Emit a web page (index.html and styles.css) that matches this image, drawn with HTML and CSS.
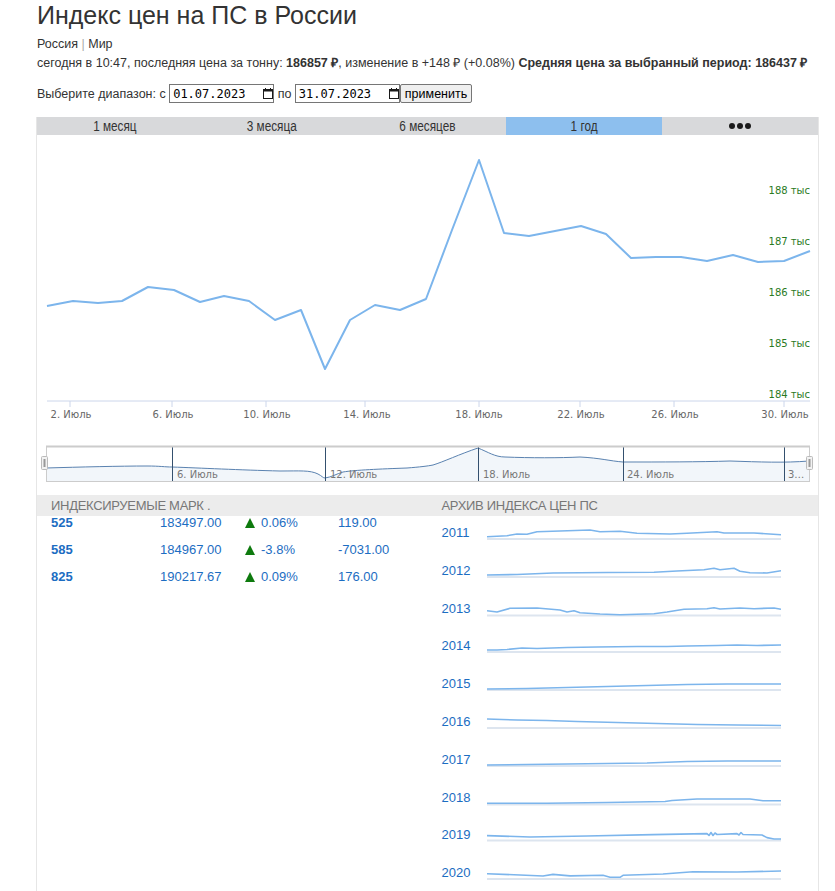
FILE: index.html
```html
<!DOCTYPE html>
<html lang="ru">
<head>
<meta charset="utf-8">
<title>Индекс цен на ПС в России</title>
<link rel="stylesheet" href="styles.css">
</head>
<body>
<h1 class="title">Индекс цен на ПС в России</h1>
<div class="regions"><a class="reg">Россия</a> <span class="sep">|</span> <a class="reg">Мир</a></div>
<p class="summary">сегодня в 10:47, последняя цена за тонну: <b>186857 ₽</b>, изменение в +148 ₽ (+0.08%) <b>Средняя цена за выбранный период: 186437 ₽</b></p>
<form class="range">
  <span class="lbl">Выберите диапазон: с </span>
  <label class="date"><input class="date-input" type="text" value="01.07.2023"><svg class="cal" viewBox="0 0 10 11" width="10" height="11"><rect x="0.5" y="1.5" width="9" height="9" fill="none" stroke="#1a1a1a"/><rect x="0.5" y="1.5" width="9" height="2" fill="#1a1a1a"/><rect x="2" y="0" width="1" height="2" fill="#1a1a1a"/><rect x="7" y="0" width="1" height="2" fill="#1a1a1a"/></svg></label>
  <span class="lbl"> по </span>
  <label class="date"><input class="date-input" type="text" value="31.07.2023"><svg class="cal" viewBox="0 0 10 11" width="10" height="11"><rect x="0.5" y="1.5" width="9" height="9" fill="none" stroke="#1a1a1a"/><rect x="0.5" y="1.5" width="9" height="2" fill="#1a1a1a"/><rect x="2" y="0" width="1" height="2" fill="#1a1a1a"/><rect x="7" y="0" width="1" height="2" fill="#1a1a1a"/></svg></label>
  <button class="apply" type="button">применить</button>
</form>

<div class="board">
  <div class="tabs">
    <div class="tab"><span class="tab-text">1 месяц</span></div>
    <div class="tab"><span class="tab-text">3 месяца</span></div>
    <div class="tab"><span class="tab-text">6 месяцев</span></div>
    <div class="tab active"><span class="tab-text">1 год</span></div>
    <div class="tab more"><span class="dot"></span><span class="dot"></span><span class="dot"></span></div>
  </div>

  <div class="chart">
    <svg class="chart-svg" width="781" height="360" viewBox="37 135 781 360">
      <g class="ylabels">
        <text x="810" y="194">188 тыс</text>
        <text x="810" y="245">187 тыс</text>
        <text x="810" y="296">186 тыс</text>
        <text x="810" y="347">185 тыс</text>
        <text x="810" y="398">184 тыс</text>
      </g>
      <line x1="47" y1="401" x2="810" y2="401" class="axis"/>
      <g class="ticks">
        <line x1="70" y1="401" x2="70" y2="407"/>
        <line x1="172" y1="401" x2="172" y2="407"/>
        <line x1="266" y1="401" x2="266" y2="407"/>
        <line x1="365" y1="401" x2="365" y2="407"/>
        <line x1="479" y1="401" x2="479" y2="407"/>
        <line x1="580" y1="401" x2="580" y2="407"/>
        <line x1="674" y1="401" x2="674" y2="407"/>
        <line x1="784" y1="401" x2="784" y2="407"/>
      </g>
      <g class="xlabels">
        <text x="71" y="418">2. Июль</text>
        <text x="173" y="418">6. Июль</text>
        <text x="267" y="418">10. Июль</text>
        <text x="367" y="418">14. Июль</text>
        <text x="479" y="418">18. Июль</text>
        <text x="581" y="418">22. Июль</text>
        <text x="675" y="418">26. Июль</text>
        <text x="785" y="418">30. Июль</text>
      </g>
      <polyline class="series" points="47,306 73,301 98,303 122,301 148,287 174,290 200,302 224,296 249,301 275,320 301,310 325,369 350,320 375,305 400,310 426,299 452,230 479,160 504,233 529,236 555,231 581,226 606,234 631,258 656,257 681,257 707,261 733,255 758,262 784,261 810,251"/>

      <g class="navigator">
        <path class="nav-area" d="M46,468 C80,467 120,466 147,466 C160,466 165,467 172,467 C200,468 240,470 280,471 C300,471 310,470 318,474 C322,476 323,478 325,478 C332,477 336,474 343,472 C355,470 380,469 407,468 C420,467 428,466 433,465 C443,462 460,454 478,448 C488,452 495,457 505,457 C530,458 560,458 580,457 C600,458 610,461 623,462 C660,462 700,462 730,461 C760,462 784,463 809,461 L809,482 L46,482 Z"/>
        <path class="nav-line" d="M46,468 C80,467 120,466 147,466 C160,466 165,467 172,467 C200,468 240,470 280,471 C300,471 310,470 318,474 C322,476 323,478 325,478 C332,477 336,474 343,472 C355,470 380,469 407,468 C420,467 428,466 433,465 C443,462 460,454 478,448 C488,452 495,457 505,457 C530,458 560,458 580,457 C600,458 610,461 623,462 C660,462 700,462 730,461 C760,462 784,463 809,461"/>
        <g class="nav-grid">
          <line x1="172.5" y1="446" x2="172.5" y2="482"/>
          <line x1="325.5" y1="446" x2="325.5" y2="482"/>
          <line x1="478.5" y1="446" x2="478.5" y2="482"/>
          <line x1="623.5" y1="446" x2="623.5" y2="482"/>
          <line x1="784.5" y1="446" x2="784.5" y2="482"/>
        </g>
        <g class="nav-labels">
          <text x="177" y="478">6. Июль</text>
          <text x="330" y="478">12. Июль</text>
          <text x="483" y="478">18. Июль</text>
          <text x="627" y="478">24. Июль</text>
          <text x="788" y="478">3…</text>
        </g>
        <rect class="nav-outline" x="46.5" y="446.5" width="763" height="35"/>
        <line class="nav-top" x1="46" y1="446.5" x2="810" y2="446.5"/>
        <g class="handle">
          <rect x="41.5" y="456.5" width="6" height="13" rx="1"/>
          <line x1="44.5" y1="459" x2="44.5" y2="467"/>
        </g>
        <g class="handle">
          <rect x="806.5" y="456.5" width="6" height="13" rx="1"/>
          <line x1="809.5" y1="459" x2="809.5" y2="467"/>
        </g>
      </g>
    </svg>
  </div>

  <div class="lower">
    <section class="col">
      <h2 class="col-head">ИНДЕКСИРУЕМЫЕ МАРК .</h2>
      <div class="marks">
        <div class="mark"><a class="mark-name">525</a><span>183497.00</span><span class="chg"><i class="up"></i>0.06%</span><span>119.00</span></div>
        <div class="mark"><a class="mark-name">585</a><span>184967.00</span><span class="chg"><i class="up"></i>-3.8%</span><span>-7031.00</span></div>
        <div class="mark"><a class="mark-name">825</a><span>190217.67</span><span class="chg"><i class="up"></i>0.09%</span><span>176.00</span></div>
      </div>
    </section>
    <section class="col">
      <h2 class="col-head">АРХИВ ИНДЕКСА ЦЕН ПС</h2>
      <div class="archive">
        <div class="year"><a class="year-link">2011</a><svg class="spark" viewBox="0 0 294 15" width="294" height="15"><line class="base" x1="0" y1="13" x2="294" y2="13"/><polyline points="0,10.7 20,9.7 30,8 40,8.3 50,5.7 73,5 103,4 113,5.7 133,5.3 150,7.3 183,8 200,7.3 230,5.7 237,7 267,7 294,8.7"/></svg></div>
        <div class="year"><a class="year-link">2012</a><svg class="spark" viewBox="0 0 294 15" width="294" height="15"><line class="base" x1="0" y1="13" x2="294" y2="13"/><polyline points="0,11 30,10.5 66,9 120,8.5 167,8.3 190,7 217,5.7 227,4.3 233,5.7 247,4.3 253,7.3 263,8.7 280,9 294,6.7"/></svg></div>
        <div class="year"><a class="year-link">2013</a><svg class="spark" viewBox="0 0 294 15" width="294" height="15"><line class="base" x1="0" y1="13.5" x2="294" y2="13.5"/><polyline points="0,8.7 10,10 23,6.3 50,6 73,8 80,10 87,8.7 93,10.7 113,12 133,12.7 150,12.3 167,11.7 180,10 197,7.3 220,6.7 227,5.7 233,7 253,6 267,6.7 287,6 294,7.3"/></svg></div>
        <div class="year"><a class="year-link">2014</a><svg class="spark" viewBox="0 0 294 15" width="294" height="15"><line class="base" x1="0" y1="13" x2="294" y2="13"/><polyline points="0,11 10,11 20,10.5 35,9 50,9.5 80,8.5 110,8 150,7.5 180,7.5 200,7 230,6.5 250,6 270,6.5 294,6"/></svg></div>
        <div class="year"><a class="year-link">2015</a><svg class="spark" viewBox="0 0 294 15" width="294" height="15"><line class="base" x1="0" y1="13" x2="294" y2="13"/><polyline points="0,12 40,11.5 80,10.5 120,9.5 160,8.5 200,7.5 240,7 294,7"/></svg></div>
        <div class="year"><a class="year-link">2016</a><svg class="spark" viewBox="0 0 294 15" width="294" height="15"><line class="base" x1="0" y1="13" x2="294" y2="13"/><polyline points="0,4 15,4.5 30,5 60,5.5 90,6.5 130,7.5 170,8.5 210,9.5 250,10 294,10.5"/></svg></div>
        <div class="year"><a class="year-link">2017</a><svg class="spark" viewBox="0 0 294 15" width="294" height="15"><line class="base" x1="0" y1="13" x2="294" y2="13"/><polyline points="0,12 40,11.5 80,11 120,10.5 160,10 200,8.5 240,8 294,8"/></svg></div>
        <div class="year"><a class="year-link">2018</a><svg class="spark" viewBox="0 0 294 15" width="294" height="15"><line class="base" x1="0" y1="13.5" x2="294" y2="13.5"/><polyline points="0,12.3 60,12.3 120,11.5 178,10.5 185,9.5 210,8 263,8 276,9.7 294,9.7"/></svg></div>
        <div class="year"><a class="year-link">2019</a><svg class="spark" viewBox="0 0 294 15" width="294" height="15"><line class="base" x1="0" y1="12.5" x2="294" y2="12.5"/><polyline points="0,7.6 43,9 100,8 166,6.6 220,5.6 222,7.5 224,4.5 226,7.5 228,5 230,6.5 250,5.6 252,7 254,4.5 256,6.5 275,7 280,9.6 287,11 294,11"/></svg></div>
        <div class="year"><a class="year-link">2020</a><svg class="spark" viewBox="0 0 294 15" width="294" height="15"><line class="base" x1="0" y1="13" x2="294" y2="13"/><polyline points="0,7.7 33,9 56,10 66,8.4 83,9.9 116,9.3 123,11.3 133,11.3 136,9.3 176,8 206,5.7 250,6 294,5"/></svg></div>
      </div>
    </section>
  </div>
</div>
</body>
</html>
```

FILE: styles.css
```css
html, body {
  background: #fff;
}
body {
  margin: 0;
  padding: 0 0 0 37px;
  font-family: "Liberation Sans", Arial, sans-serif;
  color: #333;
  font-size: 12.5px;
}
.title {
  margin: 0;
  padding-top: 1px;
  font-size: 25px;
  line-height: 28px;
  font-weight: normal;
  color: #333;
}
.regions {
  margin-top: 7px;
  line-height: 16px;
}
.reg {
  color: #333;
  text-decoration: none;
}
.sep {
  color: #aaa;
}
.summary {
  margin: 3px 0 0;
  line-height: 16px;
  white-space: nowrap;
}
.summary b {
  font-weight: bold;
}
.range {
  margin: 13px 0 0;
  display: flex;
  align-items: center;
  height: 19px;
}
.lbl {
  white-space: pre;
}
.date {
  display: inline-flex;
  align-items: center;
  box-sizing: border-box;
  width: 105px;
  height: 19px;
  border: 1px solid #767676;
  background: #fff;
}
.date-input {
  border: 0;
  padding: 0 0 0 3px;
  margin: 0;
  width: 82px;
  height: 17px;
  font-family: "DejaVu Sans Mono", "Liberation Mono", monospace;
  font-size: 12px;
  color: #000;
  background: transparent;
  outline: none;
}
.cal {
  margin-left: 8px;
}
.apply {
  box-sizing: border-box;
  height: 19px;
  padding: 0 4px;
  margin: 0;
  font-family: "Liberation Sans", Arial, sans-serif;
  font-size: 12.5px;
  color: #000;
  background: #efefef;
  border: 1px solid #767676;
  border-radius: 2px;
}

.board {
  margin-top: 14px;
  margin-left: -1px;
  width: 781px;
  border-left: 1px solid #e6e6e6;
  border-right: 1px solid #e6e6e6;
}
.tabs {
  display: flex;
  height: 18px;
  background: #d8d9db;
}
.tab {
  flex: 1;
  display: flex;
  align-items: center;
  justify-content: center;
  font-size: 14px;
  color: #333;
}
.tab-text {
  display: inline-block;
  transform: scaleX(0.84);
}
.tab.active {
  background: #8dbfee;
}
.tab.more {
  gap: 2px;
}
.dot {
  width: 6px;
  height: 6px;
  border-radius: 50%;
  background: #1a1a1a;
}
.chart {
  height: 360px;
}
.chart-svg {
  display: block;
}
.ylabels text {
  font-family: "DejaVu Sans", sans-serif;
  font-size: 10px;
  fill: #2a7a1e;
  text-anchor: end;
}
.xlabels text {
  font-family: "DejaVu Sans", sans-serif;
  font-size: 10px;
  fill: #666;
  text-anchor: middle;
}
.axis {
  stroke: #ccd6eb;
  stroke-width: 1;
}
.ticks line {
  stroke: #ccd6eb;
  stroke-width: 1;
}
.series {
  fill: none;
  stroke: #7cb5ec;
  stroke-width: 2;
  stroke-linejoin: round;
}
.nav-area {
  fill: #f2f6fa;
}
.nav-line {
  fill: none;
  stroke: #5a82b0;
  stroke-width: 1;
}
.nav-grid line {
  stroke: #34506e;
  stroke-width: 1;
}
.nav-labels text {
  font-family: "DejaVu Sans", sans-serif;
  font-size: 10px;
  fill: #777;
}
.nav-outline {
  fill: none;
  stroke: #cccccc;
  stroke-width: 1;
}
.nav-top {
  stroke: #cccccc;
  stroke-width: 2;
}
.handle rect {
  fill: #f2f2f2;
  stroke: #bbbbbb;
  stroke-width: 1;
}
.handle line {
  stroke: #999;
  stroke-width: 2;
}

.lower {
  display: grid;
  grid-template-columns: 1fr 1fr;
}
.col-head {
  margin: 0;
  height: 21px;
  line-height: 21px;
  padding-left: 14px;
  background: #ececec;
  font-size: 13px;
  font-weight: normal;
  color: #777;
  letter-spacing: -0.3px;
}
.mark {
  display: grid;
  grid-template-columns: 109px 85px 93px auto;
  height: 27px;
  line-height: 13px;
  padding-left: 14px;
  font-size: 13px;
  color: #1c6dc2;
}
.mark-name {
  font-weight: bold;
  color: #1c6dc2;
}
.chg {
  display: flex;
  align-items: center;
  height: 13px;
}
.up {
  display: inline-block;
  width: 0;
  height: 0;
  border-left: 5px solid transparent;
  border-right: 5px solid transparent;
  border-bottom: 10px solid #0e7a0e;
  margin-right: 6px;
}
.archive {
  padding-top: 9px;
  padding-left: 14px;
}
.year {
  display: flex;
  align-items: flex-start;
  height: 37.8px;
}
.year-link {
  width: 45.5px;
  line-height: 16px;
  font-size: 13px;
  color: #1c6dc2;
}
.spark {
  margin-top: 1px;
  display: block;
}
.spark polyline {
  fill: none;
  stroke: #7cb5ec;
  stroke-width: 1.6;
  stroke-linejoin: round;
}
.spark .base {
  stroke: #dde5ef;
  stroke-width: 2;
}
```
